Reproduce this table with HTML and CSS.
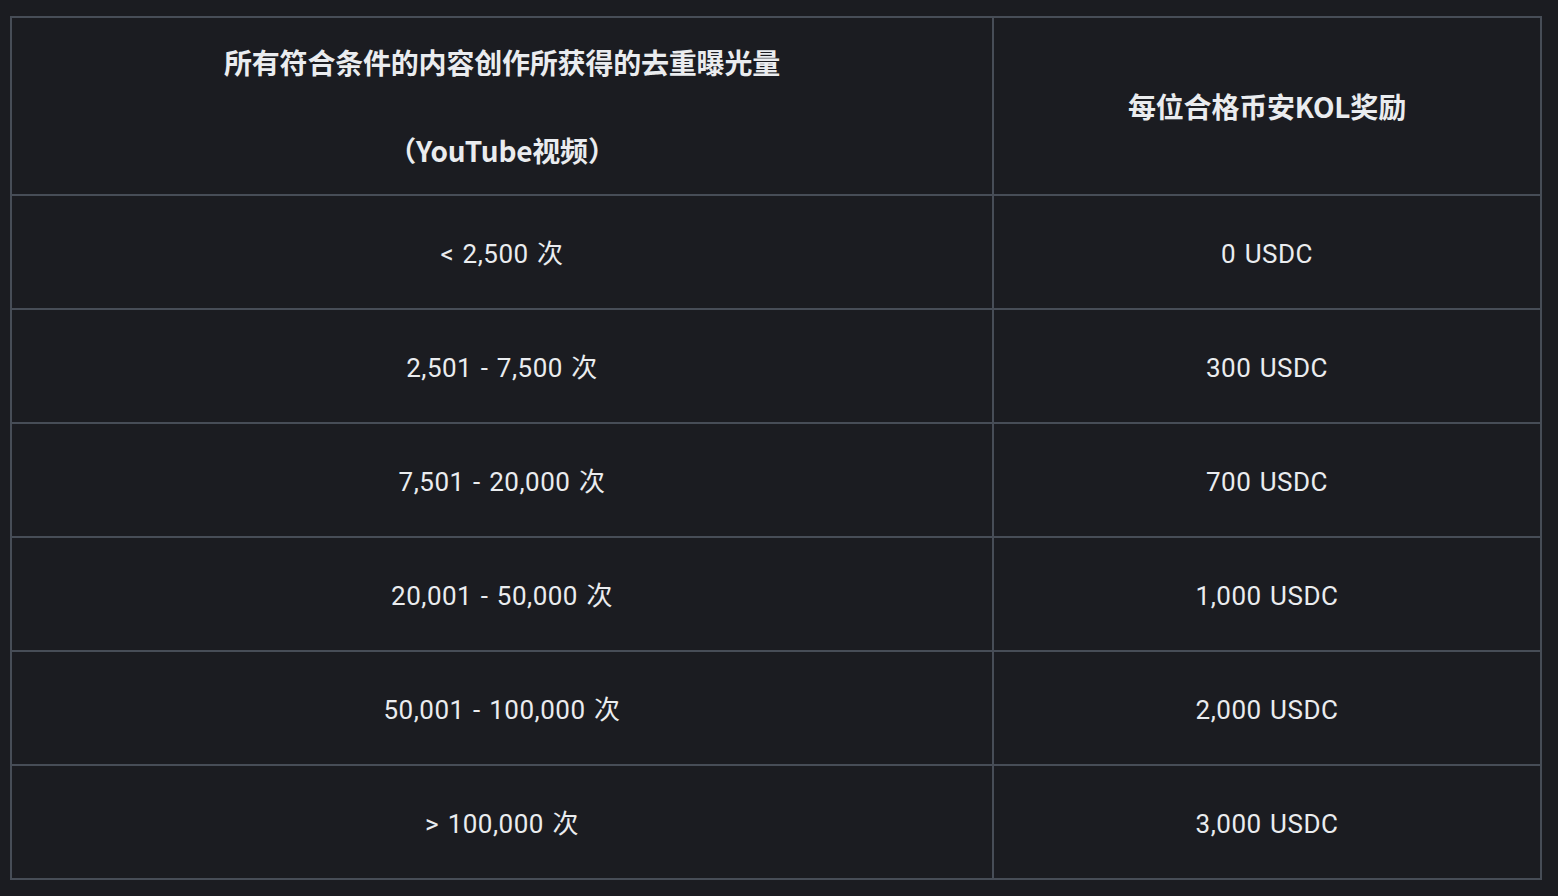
FILE: index.html
```html
<!DOCTYPE html>
<html lang="zh-CN">
<head>
<meta charset="utf-8">
<title>奖励表</title>
<link rel="stylesheet" href="styles.css">
</head>
<body>
<div class="reward-table">
  <div class="cell head head-left">
    <p class="head-line">所有符合条件的内容创作所获得的去重曝光量</p>
    <p class="head-line">（YouTube视频）</p>
  </div>
  <div class="cell head">
    <p class="head-line">每位合格币安KOL奖励</p>
  </div>

  <div class="cell">&lt; 2,500 次</div>
  <div class="cell">0 USDC</div>

  <div class="cell">2,501 - 7,500 次</div>
  <div class="cell">300 USDC</div>

  <div class="cell">7,501 - 20,000 次</div>
  <div class="cell">700 USDC</div>

  <div class="cell">20,001 - 50,000 次</div>
  <div class="cell">1,000 USDC</div>

  <div class="cell">50,001 - 100,000 次</div>
  <div class="cell">2,000 USDC</div>

  <div class="cell">&gt; 100,000 次</div>
  <div class="cell">3,000 USDC</div>
</div>
</body>
</html>
```

FILE: styles.css
```css
html, body {
  margin: 0;
  background: #1b1c21;
}

body {
  padding: 16px 16px 16px 10px;
  font-family: Roboto, "Noto Sans CJK SC", sans-serif;
  color: #eaecef;
}

.reward-table {
  width: 1532px;
  box-sizing: border-box;
  display: grid;
  grid-template-columns: 980px 546px;
  grid-template-rows: 176px repeat(6, 112px);
  gap: 2px;
  padding: 2px;
  background: #474d57;
}

.cell {
  background: #1b1c21;
  display: flex;
  flex-direction: column;
  align-items: center;
  justify-content: center;
  font-size: 26px;
  line-height: 32px;
  letter-spacing: 0.5px;
  word-spacing: 1.5px;
  padding-top: 4px;
  box-sizing: border-box;
}

.head {
  font-family: "Noto Sans CJK SC", "Noto Sans", sans-serif;
  font-weight: 700;
  font-size: 28px;
  letter-spacing: -0.2px;
  word-spacing: 0;
  padding-top: 0;
}

.head-left {
  gap: 48px;
}

.head-line {
  margin: 0;
  line-height: 40px;
}
```
